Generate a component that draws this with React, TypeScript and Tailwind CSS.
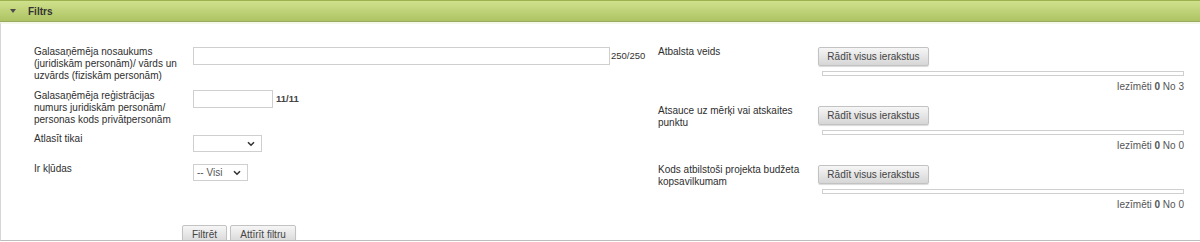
import React from "react";

function Chevron() {
  return (
    <svg width="8" height="6" viewBox="0 0 8 6" className="shrink-0">
      <path d="M1 1.2 L4 4.2 L7 1.2" fill="none" stroke="#333" strokeWidth="1.6" />
    </svg>
  );
}

function Select({ w, text }: { w: string; text?: string }) {
  return (
    <div className={`${w} h-[17px] border border-[#cfcfcf] bg-white flex items-center justify-between pl-[3px] pr-[6px] text-[10px] text-[#555]`}>
      <span>{text ?? ""}</span>
      <Chevron />
    </div>
  );
}

function GrayButton({ children, className = "" }: { children: React.ReactNode; className?: string }) {
  return (
    <div
      className={`h-[19px] border border-[#c2c2c2] rounded-[2px] bg-gradient-to-b from-[#f6f6f6] to-[#d6d6d6] flex items-center justify-center text-[10px] text-[#444] shadow-[0_1px_1px_rgba(0,0,0,0.15)] ${className}`}
    >
      {children}
    </div>
  );
}

const labelCls = "pt-[2px] leading-[12px] text-[10px] text-[#2e2e2e]";

function RightRow({ label, total }: { label: React.ReactNode; total: string }) {
  return (
    <div className="flex">
      <div className={`w-[160px] ${labelCls}`}>{label}</div>
      <div className="flex-1 flex flex-col">
        <GrayButton className="mt-[3px] w-[111px]">Rādīt visus ierakstus</GrayButton>
        <div className="mt-[5px] ml-[4px] h-[5px] border border-[#cfcfcf] bg-white" />
        <div className="mt-[5px] leading-[12px] text-right text-[10px] text-[#555]">
          Iezīmēti <b>0</b> No {total}
        </div>
      </div>
    </div>
  );
}

export default function App() {
  return (
    <div className="w-[1200px] h-[242px] overflow-hidden bg-white font-['Liberation_Sans',Arial,sans-serif] text-[10px] text-[#333]">
      <div className="h-[22px] border-t border-t-[#9db14f] border-b border-b-[#9aa95e] bg-gradient-to-b from-[#d0e18c] to-[#adc363] flex items-center">
        <svg width="6" height="4" viewBox="0 0 6 4" className="ml-[10px]">
          <path d="M0 0 L6 0 L3 4 Z" fill="#4a4a4a" />
        </svg>
        <span className="ml-[12px] font-bold text-[10px] text-[#333]">Filtrs</span>
      </div>
      <div className="h-[219px] border-l border-l-[#d6d6d6] border-b border-b-[#bdbdbd] border-t-2 border-t-[#f4f8ea] flex flex-col overflow-hidden">
        <div className="flex pt-[20px]">
          <div className="w-[657px] pl-[33px] flex flex-col">
            <div className="flex">
              <div className={`w-[159px] ${labelCls}`}>
                Galasaņēmēja nosaukums<br />(juridiskām personām)/ vārds un<br />uzvārds (fiziskām personām)
              </div>
              <div className="mt-[3px] flex items-center h-[18px]">
                <div className="w-[417px] h-[18px] border border-[#cfcfcf] bg-white" />
                <span className="ml-[1px] text-[9.5px]">250/250</span>
              </div>
            </div>
            <div className="flex mt-[6px]">
              <div className={`w-[159px] ${labelCls}`}>
                Galasaņēmēja reģistrācijas<br />numurs juridiskām personām/<br />personas kods privātpersonām
              </div>
              <div className="mt-[2px] flex items-center h-[18px]">
                <div className="w-[80px] h-[18px] border border-[#cfcfcf] bg-white" />
                <span className="ml-[3px] text-[9.5px] font-bold text-[#444]">11/11</span>
              </div>
            </div>
            <div className="flex mt-[5px]">
              <div className={`w-[159px] ${labelCls}`}>Atlasīt tikai</div>
              <div className="mt-[4px]">
                <Select w="w-[69px]" />
              </div>
            </div>
            <div className="flex mt-[9px]">
              <div className={`w-[159px] ${labelCls}`}>Ir kļūdas</div>
              <div className="mt-[3px]">
                <Select w="w-[55px]" text="-- Visi" />
              </div>
            </div>
          </div>
          <div className="w-[526px] flex flex-col gap-[10px]">
            <RightRow label="Atbalsta veids" total="3" />
            <RightRow label={<>Atsauce uz mērķi vai atskaites<br />punktu</>} total="0" />
            <RightRow label={<>Kods atbilstoši projekta budžeta<br />kopsavilkumam</>} total="0" />
          </div>
        </div>
        <div className="flex gap-[3px] ml-[181px] mt-[14px]">
          <GrayButton className="w-[45px]">Filtrēt</GrayButton>
          <GrayButton className="w-[66px]">Attīrīt filtru</GrayButton>
        </div>
      </div>
    </div>
  );
}
